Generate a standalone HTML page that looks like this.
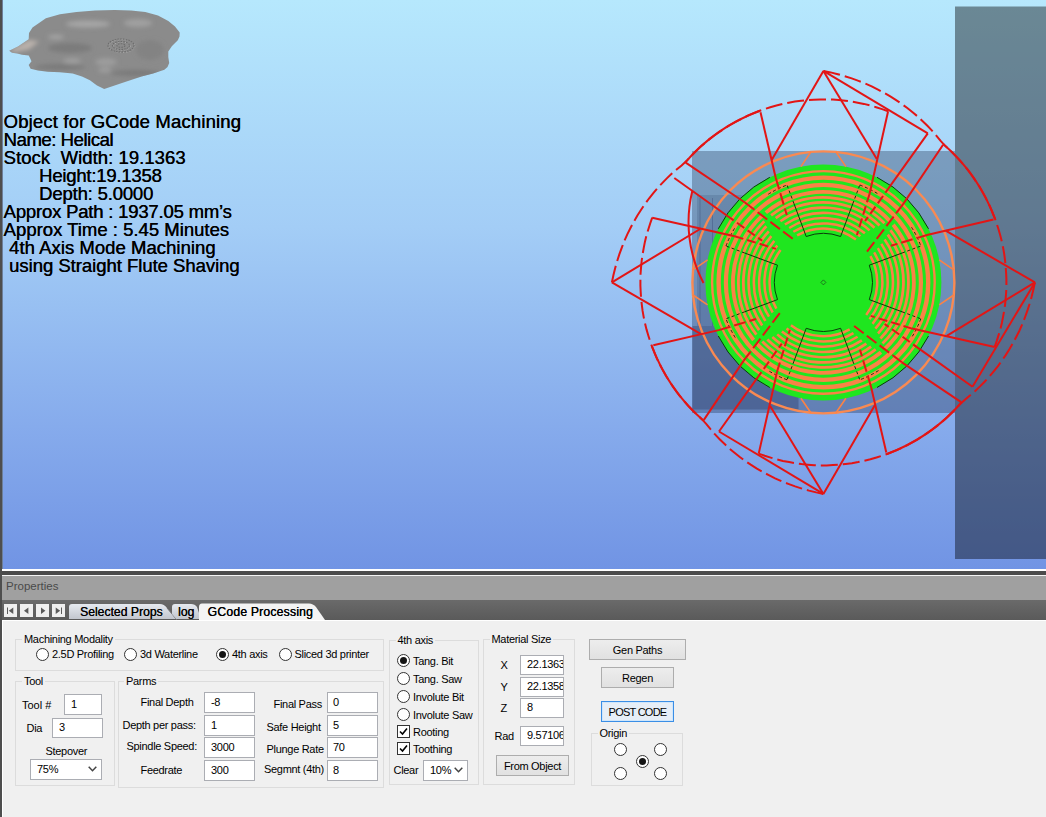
<!DOCTYPE html>
<html><head><meta charset="utf-8"><title>GCode Processing</title>
<style>
*{box-sizing:border-box;margin:0;padding:0}
html,body{width:1046px;height:817px;overflow:hidden;background:#f0f0f0}
body{position:relative;font-family:"Liberation Sans",sans-serif;font-size:11px;color:#000;letter-spacing:-0.3px}
.abs{position:absolute}
#vp{position:absolute;left:0;top:0;width:1046px;height:569px;background:linear-gradient(to bottom,#b6e8fd 0%,#a3cdf6 40%,#86abec 75%,#7194e4 100%)}
#lb{position:absolute;left:0;top:0;width:2px;height:817px;background:#4e4e4e}
#lb2{position:absolute;left:2px;top:0;width:1px;height:569px;background:#6d7f9a}
#vtext{position:absolute;left:3.5px;top:113px;text-shadow:0.35px 0 0 #000;font-size:18.5px;line-height:18px;letter-spacing:0;white-space:pre;color:#000}
#s1{position:absolute;left:0;top:569px;width:1046px;height:2px;background:#fff}
#s2{position:absolute;left:0;top:571px;width:1046px;height:4px;background:#4b4b4b}
#s3{position:absolute;left:2px;top:575px;width:1044px;height:1px;background:#f4f4f4}
#ph{position:absolute;left:2px;top:576px;width:1044px;height:24px;background:#a0a0a0}
#ph span{position:absolute;left:4px;top:4px;font-size:11.5px;letter-spacing:0;color:#4a4a4a}
#tb{position:absolute;left:2px;top:600px;width:1044px;height:20px;background:linear-gradient(#6a6a6a,#5a5a5a)}
#ct{position:absolute;left:2px;top:620px;width:1044px;height:197px;background:#f0f0f0;border-top:1px solid #fff;border-left:1px solid #fff}
.nb{position:absolute;top:604px;width:13px;height:13px;background:#efefef}
.tabtxt{position:absolute;top:605px;font-size:12.2px;text-shadow:0.2px 0 0 #222;letter-spacing:0;white-space:nowrap}
.grp{position:absolute;border:1px solid #dcdcdc;}
.gl{position:absolute;background:#f0f0f0;padding:0 2px;white-space:nowrap;line-height:13px}
.t{position:absolute;white-space:nowrap;line-height:13px}
.in{position:absolute;background:#fff;border:1px solid #abadb3;white-space:nowrap;overflow:hidden;line-height:13px}
.in span{position:absolute;left:5px;top:2px}
.rd{position:absolute;width:13px;height:13px;border-radius:50%;border:1px solid #333;background:#fff}
.rd.on::after{content:"";position:absolute;left:2px;top:2px;width:7px;height:7px;border-radius:50%;background:#151515}
.cb{position:absolute;width:13px;height:13px;border:1px solid #333;background:#fff}
.btn{position:absolute;border:1px solid #adadad;background:linear-gradient(#ededed,#e1e1e1);text-align:center;white-space:nowrap}
</style></head>
<body>
<div id="vp"></div>
<div id="lb2"></div>
<svg class="abs" style="left:0;top:0" width="200" height="100" viewBox="0 0 200 100">
<defs><filter id="bl" x="-50%" y="-50%" width="200%" height="200%"><feGaussianBlur stdDeviation="2.2"/></filter>
<clipPath id="hc"><path id="hp" d="M9.2,50.7 L18,46.5 L28.7,39.2 L29,33 L32.5,27.5 L45.9,18.2 L60,14.2 L76.5,11.9 L95,10.5 L114.7,9.9 L131,10.4 L145.3,11.9 L158,15.5 L168.3,21 L175,26.5 L179.7,32.5 L179.5,36.5 L177.8,40.2 L172,46 L168.3,51.6 L168.3,57 L169.2,63.1 L167.5,67 L164.4,69.8 L153,73.5 L141.5,76.5 L122,83 L104.2,88.9 L97,85.5 L89.9,80.3 L82,76.5 L72.7,73.6 L60,72.2 L47.8,71.7 L38,70.5 L30.6,68.8 L28.7,65 L31.5,61.2 L30,58 L28.7,55.4 L22,54.8 L17.2,53.5 L12,52.8 Z"/></clipPath></defs>
<use href="#hp" fill="#8b8b8b"/>
<g clip-path="url(#hc)" filter="url(#bl)">
<ellipse cx="88" cy="24" rx="22" ry="3.5" fill="#a6a6a6"/>
<ellipse cx="138" cy="23" rx="14" ry="4" fill="#a0a0a0"/>
<ellipse cx="56" cy="37" rx="8" ry="2.5" fill="#a2a2a2"/>
<path d="M9.5,50.6 L29,39.8 L39,41.5 L29,49.5 L14,52.6 Z" fill="#b9b1ab"/>
<ellipse cx="72" cy="61" rx="9" ry="3" fill="#9e9e9e"/>
<ellipse cx="106" cy="62" rx="11" ry="4" fill="#9c9c9c"/>
<ellipse cx="105" cy="70" rx="7" ry="2.5" fill="#9e9e9e"/>
<ellipse cx="70" cy="48" rx="22" ry="5" fill="#7c7c7c"/>
<ellipse cx="150" cy="50" rx="14" ry="10" fill="#838383"/>
<ellipse cx="60" cy="67" rx="25" ry="3" fill="#7a7a7a"/>
<ellipse cx="135" cy="73" rx="25" ry="3" fill="#7a7a7a"/>
</g>
<g fill="none" stroke="#b2b2b2" stroke-width="1" stroke-dasharray="1.2 2.1" transform="translate(0.8,0.6)"><ellipse cx="121" cy="45.5" rx="13" ry="6.5"/><ellipse cx="121" cy="45.5" rx="8.5" ry="4"/></g>
<g fill="none" stroke="#6c6c6c" stroke-width="1.1" stroke-dasharray="1.6 1.1"><ellipse cx="121" cy="45.5" rx="13" ry="6.5"/><ellipse cx="121" cy="45.5" rx="8.5" ry="4"/><ellipse cx="121" cy="45.5" rx="4" ry="1.8"/></g>
</svg>
<div id="vtext"><div style="height:18px;padding-left:0px;letter-spacing:0.157px">Object for GCode Machining</div><div style="height:18px;padding-left:0px;letter-spacing:-0.435px">Name: Helical</div><div style="height:18px;padding-left:0px;letter-spacing:0.048px">Stock  Width: 19.1363</div><div style="height:18px;padding-left:35.5px;letter-spacing:-0.214px">Height:19.1358</div><div style="height:18px;padding-left:35.5px;letter-spacing:-0.172px">Depth: 5.0000</div><div style="height:18px;padding-left:0px;letter-spacing:-0.196px">Approx Path : 1937.05 mm’s</div><div style="height:18px;padding-left:0px;letter-spacing:0.011px">Approx Time : 5.45 Minutes</div><div style="height:18px;padding-left:5.5px;letter-spacing:0.036px">4th Axis Mode Machining</div><div style="height:18px;padding-left:5.5px;letter-spacing:-0.032px">using Straight Flute Shaving</div></div>
<svg class="abs" style="left:0;top:0" width="1046" height="569" viewBox="0 0 1046 569">
<rect x="955" y="6.5" width="91" height="552.5" fill="rgba(0,0,0,0.41)"/>
<rect x="692" y="151" width="263" height="262" fill="rgba(0,10,40,0.28)"/>
<rect x="697" y="195" width="101.5" height="131" fill="rgba(10,20,60,0.13)"/>
<path d="M700,198 V326 M712.5,198 V326" stroke="rgba(30,40,90,0.25)" stroke-width="1"/>
<rect x="692.5" y="326" width="106" height="83.5" fill="rgba(10,20,60,0.25)"/>
<circle cx="823.4" cy="282.4" r="131" fill="none" stroke="#f98a52" stroke-width="2.4"/>
<circle cx="823.4" cy="282.4" r="118" fill="#1fe61f"/>
<g fill="none" stroke="#fa8246">
<path d="M797.1,235.4 A53.8,53.8 0 0 1 855.9,239.6 M870.4,256.1 A53.8,53.8 0 0 1 866.2,314.9 M849.7,329.4 A53.8,53.8 0 0 1 790.9,325.2 M776.4,308.7 A53.8,53.8 0 0 1 780.6,249.9" stroke-width="2.5"/>
<path d="M793.3,231.7 A59.0,59.0 0 0 1 860.3,236.3 M874.1,252.3 A59.0,59.0 0 0 1 869.5,319.3 M853.5,333.1 A59.0,59.0 0 0 1 786.5,328.5 M772.7,312.5 A59.0,59.0 0 0 1 777.3,245.5" stroke-width="2.5"/>
<path d="M789.2,228.0 A64.3,64.3 0 0 1 864.9,233.3 M877.8,248.2 A64.3,64.3 0 0 1 872.5,323.9 M857.6,336.8 A64.3,64.3 0 0 1 781.9,331.5 M769.0,316.6 A64.3,64.3 0 0 1 774.3,240.9" stroke-width="2.5"/>
<path d="M784.9,224.5 A69.5,69.5 0 0 1 869.6,230.4 M881.3,243.9 A69.5,69.5 0 0 1 875.4,328.6 M861.9,340.3 A69.5,69.5 0 0 1 777.2,334.4 M765.5,320.9 A69.5,69.5 0 0 1 771.4,236.2" stroke-width="2.6"/>
<path d="M780.4,221.2 A74.8,74.8 0 0 1 874.5,227.8 M884.6,239.4 A74.8,74.8 0 0 1 878.0,333.5 M866.4,343.6 A74.8,74.8 0 0 1 772.3,337.0 M762.2,325.4 A74.8,74.8 0 0 1 768.8,231.3" stroke-width="2.6"/>
<path d="M775.7,218.1 A80.0,80.0 0 0 1 879.5,225.4 M887.7,234.7 A80.0,80.0 0 0 1 880.4,338.5 M871.1,346.7 A80.0,80.0 0 0 1 767.3,339.4 M759.1,330.1 A80.0,80.0 0 0 1 766.4,226.3" stroke-width="2.8"/>
<path d="M771.1,215.4 A85.0,85.0 0 0 1 884.5,223.3 M890.4,230.1 A85.0,85.0 0 0 1 882.5,343.5 M875.7,349.4 A85.0,85.0 0 0 1 762.3,341.5 M756.4,334.7 A85.0,85.0 0 0 1 764.3,221.3" stroke-width="2.8"/>
<path d="M765.8,212.6 A90.5,90.5 0 0 1 890.1,221.3 M893.2,224.8 A90.5,90.5 0 0 1 884.5,349.1 M881.0,352.2 A90.5,90.5 0 0 1 756.7,343.5 M753.6,340.0 A90.5,90.5 0 0 1 762.3,215.7" stroke-width="3.8"/>
<circle cx="823.4" cy="282.4" r="97.5" stroke-width="4.2"/>
<circle cx="823.4" cy="282.4" r="104.8" stroke-width="4.4"/>
<circle cx="823.4" cy="282.4" r="111.3" stroke-width="2.4"/>
</g>
<path d="M810.8,152.0 L800.9,166.6 M836.0,152.0 L845.9,166.6 M953.8,269.8 L939.2,259.9 M953.8,295.0 L939.2,304.9 M836.0,412.8 L845.9,398.2 M810.8,412.8 L800.9,398.2 M693.0,295.0 L707.6,304.9 M693.0,269.8 L707.6,259.9" fill="none" stroke="#fa8246" stroke-width="1.6"/>
<g fill="none" stroke="#0a3a0a" stroke-width="1">
<path d="M806.2,236.5 A49.0,49.0 0 0 1 840.6,236.5 M806.2,236.5 L794.0,203.7 M840.6,236.5 L852.8,203.7 M877.0,177.3 A118.0,118.0 0 0 1 928.5,228.8 M869.3,265.2 A49.0,49.0 0 0 1 869.3,299.6 M869.3,265.2 L902.1,253.0 M869.3,299.6 L902.1,311.8 M928.5,336.0 A118.0,118.0 0 0 1 877.0,387.5 M840.6,328.3 A49.0,49.0 0 0 1 806.2,328.3 M840.6,328.3 L852.8,361.1 M806.2,328.3 L794.0,361.1 M769.8,387.5 A118.0,118.0 0 0 1 718.3,336.0 M777.5,299.6 A49.0,49.0 0 0 1 777.5,265.2 M777.5,299.6 L744.7,311.8 M777.5,265.2 L744.7,253.0 M718.3,228.8 A118.0,118.0 0 0 1 769.8,177.3"/>
<path d="M794.0,203.7 L787.0,185.0 M852.8,203.7 L859.8,185.0 M859.8,185.0 A104.0,104.0 0 0 1 878.5,194.2 M911.6,227.3 A104.0,104.0 0 0 1 920.8,246.0 M902.1,253.0 L920.8,246.0 M902.1,311.8 L920.8,318.8 M920.8,318.8 A104.0,104.0 0 0 1 911.6,337.5 M878.5,370.6 A104.0,104.0 0 0 1 859.8,379.8 M852.8,361.1 L859.8,379.8 M794.0,361.1 L787.0,379.8 M787.0,379.8 A104.0,104.0 0 0 1 768.3,370.6 M735.2,337.5 A104.0,104.0 0 0 1 726.0,318.8 M744.7,311.8 L726.0,318.8 M744.7,253.0 L726.0,246.0 M726.0,246.0 A104.0,104.0 0 0 1 735.2,227.3 M768.3,194.2 A104.0,104.0 0 0 1 787.0,185.0" stroke-dasharray="3 2.5"/>
</g>
<g fill="none" stroke="#e31515" stroke-width="2" stroke-linecap="butt">
<path d="M823.4,70.9 L830.6,72.4 L837.8,74.2 L844.8,76.2 L851.7,78.4 L858.5,80.9 L865.2,83.5 L871.7,86.4 L878.0,89.6 L884.2,92.9 L890.3,96.4 L896.1,100.1 L901.8,104.0 L907.3,108.0 L912.6,112.3 L917.8,116.6 L922.7,121.2 L927.4,125.8 L932.0,130.6 L936.3,135.6 L940.4,140.6 L944.7,145.4 L949.3,149.6 L953.8,154.1 L958.2,158.6 L962.4,163.4 L966.4,168.2 L970.3,173.2 L973.9,178.4 L977.4,183.6 L980.8,189.0 L983.9,194.5 L986.8,200.1 L989.6,205.7 L992.1,211.5 L994.5,217.4 L996.6,223.3 L998.5,229.3 L1000.3,235.4 L1001.8,241.5 L1003.1,247.7 L1004.2,253.9 L1005.0,260.2 L1005.7,266.5 L1006.1,272.8 L1006.4,279.1 L1006.4,285.4 L1006.2,291.7 L1005.7,298.0 L1005.1,304.3 L1004.2,310.5 L1003.1,316.7 L1001.9,322.9 L1000.4,329.1 L998.6,335.1 L996.7,341.1 L994.6,347.1" stroke-dasharray="17 5"/>
<line x1="823.4" y1="70.9" x2="876.8" y2="159.1" />
<line x1="1034.9" y1="282.4" x2="945.7" y2="230.7" />
<line x1="823.4" y1="70.9" x2="927.8" y2="133.3" />
<line x1="888.1" y1="111.2" x2="869.6" y2="193.7" />
<line x1="869.6" y1="193.7" x2="856.9" y2="235.1" stroke-dasharray="9 4"/>
<line x1="927.8" y1="133.3" x2="890.6" y2="185.4" />
<line x1="890.6" y1="185.4" x2="865.0" y2="221.2" stroke-dasharray="9 4"/>
<line x1="943.1" y1="144.7" x2="903.3" y2="203.9" />
<line x1="903.3" y1="203.9" x2="866.8" y2="252.0" stroke-dasharray="12 4"/>
<line x1="993.5" y1="219.5" x2="928.0" y2="234.7" />
<line x1="928.0" y1="234.7" x2="890.8" y2="245.8" stroke-dasharray="12 4"/>
<path d="M943.5,144.3 A183.0,183.0 0 0 1 995.0,218.9"/>
<path d="M1034.9,282.4 L1033.4,289.6 L1031.6,296.8 L1029.6,303.8 L1027.4,310.7 L1024.9,317.5 L1022.3,324.2 L1019.4,330.7 L1016.2,337.0 L1012.9,343.2 L1009.4,349.3 L1005.7,355.1 L1001.8,360.8 L997.8,366.3 L993.5,371.6 L989.2,376.8 L984.6,381.7 L980.0,386.4 L975.2,391.0 L970.2,395.3 L965.2,399.4 L960.4,403.7 L956.2,408.3 L951.7,412.8 L947.2,417.2 L942.4,421.4 L937.6,425.4 L932.6,429.3 L927.4,432.9 L922.2,436.4 L916.8,439.8 L911.3,442.9 L905.7,445.8 L900.1,448.6 L894.3,451.1 L888.4,453.5 L882.5,455.6 L876.5,457.5 L870.4,459.3 L864.3,460.8 L858.1,462.1 L851.9,463.2 L845.6,464.0 L839.3,464.7 L833.0,465.1 L826.7,465.4 L820.4,465.4 L814.1,465.2 L807.8,464.7 L801.5,464.1 L795.3,463.2 L789.1,462.1 L782.9,460.9 L776.7,459.4 L770.7,457.6 L764.7,455.7 L758.7,453.6" stroke-dasharray="17 5"/>
<line x1="1034.9" y1="282.4" x2="946.7" y2="335.8" />
<line x1="823.4" y1="493.9" x2="875.1" y2="404.7" />
<line x1="1034.9" y1="282.4" x2="972.5" y2="386.8" />
<line x1="994.6" y1="347.1" x2="912.1" y2="328.6" />
<line x1="912.1" y1="328.6" x2="870.7" y2="315.9" stroke-dasharray="9 4"/>
<line x1="972.5" y1="386.8" x2="920.4" y2="349.6" />
<line x1="920.4" y1="349.6" x2="884.6" y2="324.0" stroke-dasharray="9 4"/>
<line x1="961.1" y1="402.1" x2="901.9" y2="362.3" />
<line x1="901.9" y1="362.3" x2="853.8" y2="325.8" stroke-dasharray="12 4"/>
<line x1="886.3" y1="452.5" x2="871.1" y2="387.0" />
<line x1="871.1" y1="387.0" x2="860.0" y2="349.8" stroke-dasharray="12 4"/>
<path d="M961.5,402.5 A183.0,183.0 0 0 1 886.9,454.0"/>
<path d="M823.4,493.9 L816.2,492.4 L809.0,490.6 L802.0,488.6 L795.1,486.4 L788.3,483.9 L781.6,481.3 L775.1,478.4 L768.8,475.2 L762.6,471.9 L756.5,468.4 L750.7,464.7 L745.0,460.8 L739.5,456.8 L734.2,452.5 L729.0,448.2 L724.1,443.6 L719.4,439.0 L714.8,434.2 L710.5,429.2 L706.4,424.2 L702.1,419.4 L697.5,415.2 L693.0,410.7 L688.6,406.2 L684.4,401.4 L680.4,396.6 L676.5,391.6 L672.9,386.4 L669.4,381.2 L666.0,375.8 L662.9,370.3 L660.0,364.7 L657.2,359.1 L654.7,353.3 L652.3,347.4 L650.2,341.5 L648.3,335.5 L646.5,329.4 L645.0,323.3 L643.7,317.1 L642.6,310.9 L641.8,304.6 L641.1,298.3 L640.7,292.0 L640.4,285.7 L640.4,279.4 L640.6,273.1 L641.1,266.8 L641.7,260.5 L642.6,254.3 L643.7,248.1 L644.9,241.9 L646.4,235.7 L648.2,229.7 L650.1,223.7 L652.2,217.7" stroke-dasharray="17 5"/>
<line x1="823.4" y1="493.9" x2="770.0" y2="405.7" />
<line x1="611.9" y1="282.4" x2="701.1" y2="334.1" />
<line x1="823.4" y1="493.9" x2="719.0" y2="431.5" />
<line x1="758.7" y1="453.6" x2="777.2" y2="371.1" />
<line x1="777.2" y1="371.1" x2="789.9" y2="329.7" stroke-dasharray="9 4"/>
<line x1="719.0" y1="431.5" x2="756.2" y2="379.4" />
<line x1="756.2" y1="379.4" x2="781.8" y2="343.6" stroke-dasharray="9 4"/>
<line x1="703.7" y1="420.1" x2="743.5" y2="360.9" />
<line x1="743.5" y1="360.9" x2="780.0" y2="312.8" stroke-dasharray="12 4"/>
<line x1="653.3" y1="345.3" x2="718.8" y2="330.1" />
<line x1="718.8" y1="330.1" x2="756.0" y2="319.0" stroke-dasharray="12 4"/>
<path d="M703.3,420.5 A183.0,183.0 0 0 1 651.8,345.9"/>
<path d="M611.9,282.4 L613.4,275.2 L615.2,268.0 L617.2,261.0 L619.4,254.1 L621.9,247.3 L624.5,240.6 L627.4,234.1 L630.6,227.8 L633.9,221.6 L637.4,215.5 L641.1,209.7 L645.0,204.0 L649.0,198.5 L653.3,193.2 L657.6,188.0 L662.2,183.1 L666.8,178.4 L671.6,173.8 L676.6,169.5 L681.6,165.4 L686.4,161.1 L690.6,156.5 L695.1,152.0 L699.6,147.6 L704.4,143.4 L709.2,139.4 L714.2,135.5 L719.4,131.9 L724.6,128.4 L730.0,125.0 L735.5,121.9 L741.1,119.0 L746.7,116.2 L752.5,113.7 L758.4,111.3 L764.3,109.2 L770.3,107.3 L776.4,105.5 L782.5,104.0 L788.7,102.7 L794.9,101.6 L801.2,100.8 L807.5,100.1 L813.8,99.7 L820.1,99.4 L826.4,99.4 L832.7,99.6 L839.0,100.1 L845.3,100.7 L851.5,101.6 L857.7,102.7 L863.9,103.9 L870.1,105.4 L876.1,107.2 L882.1,109.1 L888.1,111.2" stroke-dasharray="17 5"/>
<line x1="611.9" y1="282.4" x2="700.1" y2="229.0" />
<line x1="823.4" y1="70.9" x2="771.7" y2="160.1" />
<line x1="652.2" y1="217.7" x2="734.7" y2="236.2" />
<line x1="734.7" y1="236.2" x2="776.1" y2="248.9" stroke-dasharray="9 4"/>
<line x1="674.3" y1="178.0" x2="726.4" y2="215.2" />
<line x1="726.4" y1="215.2" x2="762.2" y2="240.8" stroke-dasharray="9 4"/>
<line x1="685.7" y1="162.7" x2="744.9" y2="202.5" />
<line x1="744.9" y1="202.5" x2="793.0" y2="239.0" stroke-dasharray="12 4"/>
<line x1="760.5" y1="112.3" x2="775.7" y2="177.8" />
<line x1="775.7" y1="177.8" x2="786.8" y2="215.0" stroke-dasharray="12 4"/>
<path d="M685.3,162.3 A183.0,183.0 0 0 1 759.9,110.8"/>
<path d="M692.3,191 A131,131 0 0 0 703.5,283"/>
</g>
<path d="M823.4,279.9 l2.5,2.5 l-2.5,2.5 l-2.5,-2.5 Z" fill="none" stroke="#1a5a1a" stroke-width="0.8"/>
</svg>
<div id="s1"></div><div id="s2"></div><div id="s3"></div>
<div id="ph"><span>Properties</span></div>
<div id="tb"></div>
<div id="ct"></div>
<div id="lb"></div>
<div class="nb" style="left:4px"><svg width="13" height="13" viewBox="0 0 13 13" fill="#5a5a5a"><path d="M3,3.5 h1 v6.5 h-1 Z M4.8,6.75 L9.3,3.4 L9.3,10.1 Z"/></svg></div><div class="nb" style="left:20px"><svg width="13" height="13" viewBox="0 0 13 13" fill="#5a5a5a"><path d="M4,6.75 L8.4,3.4 L8.4,10.1 Z"/></svg></div><div class="nb" style="left:36px"><svg width="13" height="13" viewBox="0 0 13 13" fill="#5a5a5a"><path d="M9.4,6.75 L5,3.4 L5,10.1 Z"/></svg></div><div class="nb" style="left:52px"><svg width="13" height="13" viewBox="0 0 13 13" fill="#5a5a5a"><path d="M8.2,6.75 L3.7,3.4 L3.7,10.1 Z M9,3.5 h1 v6.5 h-1 Z"/></svg></div><svg class="abs" style="left:0;top:600px" width="400" height="20" viewBox="0 600 400 20">
<defs><linearGradient id="tg" x1="0" y1="0" x2="0" y2="1"><stop offset="0" stop-color="#e6eaf0"/><stop offset="1" stop-color="#c2c6ce"/></linearGradient></defs>
<path d="M69,619 L69,607 Q69,604 72,604 L160,604 Q164,604 167,608 L176.2,619 Z" fill="url(#tg)"/>
<path d="M167,608 L177,620" stroke="#777" stroke-width="1" fill="none"/>
<path d="M172,614 L172,607 Q172,604 175,604 L191,604 Q195,604 197,607 L201,619 L176.2,619 Z" fill="url(#tg)"/>
<path d="M199,620 L199,607 Q199,603.5 202,603.5 L309,603.5 Q313,603.5 316,607 L325,620 Z" fill="#f4f4f4"/>
</svg><div class="tabtxt" style="left:80px">Selected Props</div><div class="tabtxt" style="left:178px">log</div><div class="tabtxt" style="left:207.5px;letter-spacing:0.2px;text-shadow:0.3px 0 0 #000">GCode Processing</div><div class="grp" style="left:15px;top:639px;width:369px;height:32px"></div><div class="gl" style="left:22px;top:633px">Machining Modality</div><div class="rd" style="left:36.0px;top:647.5px"></div><div class="t" style="left:52px;top:647.5px;">2.5D Profiling</div><div class="rd" style="left:123.5px;top:647.5px"></div><div class="t" style="left:140px;top:647.5px;">3d Waterline</div><div class="rd on" style="left:216.0px;top:647.5px"></div><div class="t" style="left:232px;top:647.5px;">4th axis</div><div class="rd" style="left:278.5px;top:647.5px"></div><div class="t" style="left:294.5px;top:647.5px;">Sliced 3d printer</div><div class="grp" style="left:15px;top:681px;width:100px;height:105px"></div><div class="gl" style="left:22px;top:675px">Tool</div><div class="t" style="left:22px;top:698.7px;letter-spacing:0">Tool #</div><div class="in" style="left:64px;top:694px;width:38px;height:21px"><span style="left:6px;top:3px">1</span></div><div class="t" style="left:26.5px;top:721.5px;">Dia</div><div class="in" style="left:52px;top:718px;width:51px;height:20px"><span style="left:6px;top:2px">3</span></div><div class="t" style="left:45.5px;top:745px;">Stepover</div><div class="in" style="left:30px;top:759px;width:72px;height:21px"><span style="left:6px;top:3px">75%</span><svg style="position:absolute;right:4px;top:6px" width="9" height="6" viewBox="0 0 9 6"><path d="M0.7,0.7 L4.5,4.7 L8.3,0.7" fill="none" stroke="#444" stroke-width="1.5"/></svg></div><div class="grp" style="left:118px;top:681px;width:266px;height:107px"></div><div class="gl" style="left:124px;top:675px">Parms</div><div class="t" style="left:140.5px;top:695.5px;">Final Depth</div><div class="in" style="left:204px;top:692px;width:51px;height:21px"><span style="left:6px;top:3px">-8</span></div><div class="t" style="left:273.5px;top:697.5px;">Final Pass</div><div class="in" style="left:327px;top:692px;width:51px;height:21px"><span style="left:5px;top:3px">0</span></div><div class="t" style="left:122.5px;top:719px;">Depth per pass:</div><div class="in" style="left:204px;top:715px;width:51px;height:21px"><span style="left:6px;top:3px">1</span></div><div class="t" style="left:266.5px;top:721px;">Safe Height</div><div class="in" style="left:327px;top:715px;width:51px;height:21px"><span style="left:5px;top:3px">5</span></div><div class="t" style="left:126.5px;top:739.5px;">Spindle Speed:</div><div class="in" style="left:204px;top:737px;width:51px;height:21px"><span style="left:6px;top:3px">3000</span></div><div class="t" style="left:266.5px;top:742.5px;">Plunge Rate</div><div class="in" style="left:327px;top:737px;width:51px;height:21px"><span style="left:5px;top:3px">70</span></div><div class="t" style="left:140.5px;top:763.5px;">Feedrate</div><div class="in" style="left:204px;top:760px;width:51px;height:21px"><span style="left:6px;top:3px">300</span></div><div class="t" style="left:264px;top:763px;">Segmnt (4th)</div><div class="in" style="left:327px;top:760px;width:51px;height:21px"><span style="left:5px;top:3px">8</span></div><div class="grp" style="left:389px;top:640px;width:90px;height:145px"></div><div class="gl" style="left:395.5px;top:634px">4th axis</div><div class="rd on" style="left:397.0px;top:654.0px"></div><div class="t" style="left:413px;top:655.0px;">Tang. Bit</div><div class="rd" style="left:397.0px;top:672.0px"></div><div class="t" style="left:413px;top:673.0px;">Tang. Saw</div><div class="rd" style="left:397.0px;top:690.0px"></div><div class="t" style="left:413px;top:691.0px;">Involute Bit</div><div class="rd" style="left:397.0px;top:708.0px"></div><div class="t" style="left:413px;top:709.0px;">Involute Saw</div><div class="cb" style="left:397px;top:725px"><svg style="position:absolute;left:1px;top:1px" width="9" height="9" viewBox="0 0 9 9"><path d="M1,4.5 L3.5,7 L8,1.5" fill="none" stroke="#000" stroke-width="1.6"/></svg></div><div class="t" style="left:413px;top:726px;">Rooting</div><div class="cb" style="left:397px;top:742px"><svg style="position:absolute;left:1px;top:1px" width="9" height="9" viewBox="0 0 9 9"><path d="M1,4.5 L3.5,7 L8,1.5" fill="none" stroke="#000" stroke-width="1.6"/></svg></div><div class="t" style="left:413px;top:743px;">Toothing</div><div class="t" style="left:393.5px;top:764px;">Clear</div><div class="in" style="left:423px;top:760px;width:45px;height:21px"><span style="left:6px;top:3px">10%</span><svg style="position:absolute;right:4px;top:6px" width="9" height="6" viewBox="0 0 9 6"><path d="M0.7,0.7 L4.5,4.7 L8.3,0.7" fill="none" stroke="#444" stroke-width="1.5"/></svg></div><div class="grp" style="left:483px;top:639px;width:92px;height:146px"></div><div class="gl" style="left:489.5px;top:633px">Material Size</div><div class="t" style="left:500.5px;top:658.5px;">X</div><div class="in" style="left:520px;top:655px;width:44px;height:20px"><span style="left:6px;top:2px">22.1363</span></div><div class="t" style="left:500.5px;top:680.5px;">Y</div><div class="in" style="left:520px;top:677px;width:44px;height:20px"><span style="left:6px;top:2px">22.1358</span></div><div class="t" style="left:500.5px;top:701.5px;">Z</div><div class="in" style="left:520px;top:698px;width:44px;height:20px"><span style="left:6px;top:2px">8</span></div><div class="t" style="left:494.5px;top:729.5px;">Rad</div><div class="in" style="left:520px;top:726px;width:44px;height:20px"><span style="left:6px;top:2px">9.57106</span></div><div class="btn" style="left:496px;top:755px;width:73px;height:21px;line-height:21px;">From Object</div><div class="btn" style="left:589px;top:639px;width:97px;height:21px;line-height:21px;">Gen Paths</div><div class="btn" style="left:601px;top:667px;width:73px;height:21px;line-height:21px;">Regen</div><div class="btn" style="left:601px;top:701px;width:73px;height:21px;line-height:21px;letter-spacing:-0.75px;border-color:#3a8ee6;box-shadow:inset 0 0 0 1px #cfe6fb;background:#e6eef7">POST CODE</div><div class="grp" style="left:591px;top:733px;width:92px;height:53px"></div><div class="gl" style="left:597.5px;top:727px">Origin</div><div class="rd" style="left:614.0px;top:742.5px"></div><div class="rd" style="left:653.5px;top:742.5px"></div><div class="rd on" style="left:635.5px;top:754.5px"></div><div class="rd" style="left:614.0px;top:767.0px"></div><div class="rd" style="left:653.5px;top:767.0px"></div>
</body></html>
